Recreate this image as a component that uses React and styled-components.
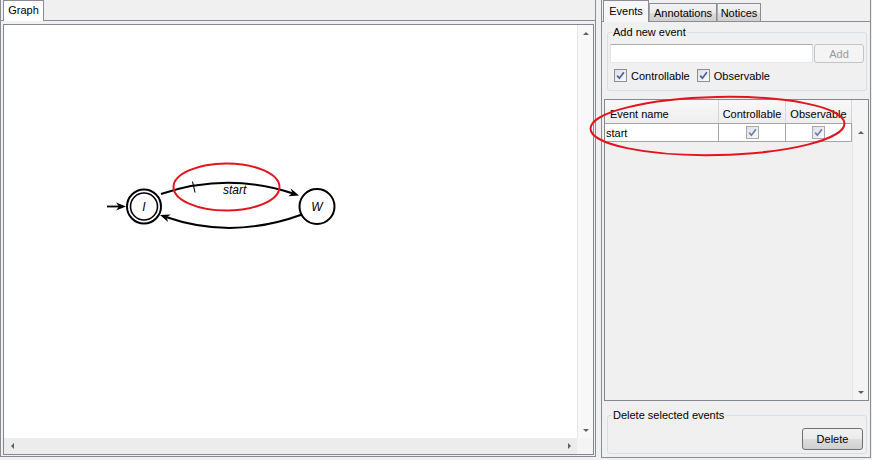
import React from "react";
import styled, { createGlobalStyle } from "styled-components";

const GlobalStyle = createGlobalStyle`
  * { box-sizing: border-box; }
  html, body { margin: 0; padding: 0; background: #f0f0f0; }
  body {
    font-family: "Liberation Sans", Arial, sans-serif;
    font-size: 11px;
    color: #000;
  }
`;

const Page = styled.div`
  position: relative;
  display: flex;
  gap: 5px;
  width: 872px;
  height: 460px;
  overflow: hidden;
  background: #f0f0f0;
`;

const Pane = styled.div`
  display: flex;
  flex-direction: column;
  flex: none;
  width: ${(p) => p.$width}px;
  height: ${(p) => p.$height}px;
  border: 1px solid #898c95;
  border-top: none;
`;

const TabStrip = styled.div`
  display: flex;
  align-items: flex-end;
  flex: none;
  height: ${(p) => p.$height}px;
  padding-left: ${(p) => p.$inset}px;
  border-bottom: 1px solid #898c95;
`;

const Tab = styled.div`
  position: relative;
  z-index: 1;
  display: flex;
  align-items: center;
  justify-content: center;
  width: ${(p) => p.$w}px;
  height: ${(p) => p.$h}px;
  margin-bottom: ${(p) => (p.$active ? -1 : 0)}px;
  padding-bottom: ${(p) => (p.$active ? 2 : 0)}px;
  border: 1px solid #898c95;
  border-bottom: none;
  border-left-color: ${(p) => (p.$active ? "#898c95" : "#a7abb0")};
  background: ${(p) =>
    p.$active ? p.$bg : "linear-gradient(#f3f3f3, #ebebeb 50%, #dddddd 51%, #cfcfcf)"};
  white-space: nowrap;
`;

/* ---------- scroll panes ---------- */

const ScrollPane = styled.div`
  flex: 1;
  min-height: 0;
  display: grid;
  grid-template-columns: 1fr 16px;
  grid-template-rows: 1fr 16px;
  margin: 3px 1px 1px 2px;
  border: 1px solid #828790;
  background: #fff;
`;

const Canvas = styled.div`
  overflow: hidden;
  background: #fff;

  svg {
    display: block;
  }
`;

const Track = styled.div`
  display: flex;
  flex-direction: ${(p) => (p.$vertical ? "column" : "row")};
  justify-content: space-between;
  background: ${(p) => p.$bg};
  ${(p) => (p.$vertical ? "border-left: 1px solid #e6e6e6;" : "")}
`;

const Corner = styled.div`
  background: #f4f4f4;
`;

const ArrowBox = styled.div`
  display: flex;
  align-items: center;
  justify-content: center;
  width: 16px;
  height: 16px;
  flex: none;
`;

const arrowShapes = {
  up: "border-width: 0 3px 3px 3px; border-bottom-color: #606060;",
  down: "border-width: 3px 3px 0 3px; border-top-color: #606060;",
  left: "border-width: 3px 3px 3px 0; border-right-color: #606060;",
  right: "border-width: 3px 0 3px 3px; border-left-color: #606060;",
};

const Arrow = styled.span`
  width: 0;
  height: 0;
  border-style: solid;
  border-color: transparent;
  ${(p) => arrowShapes[p.$dir]}
`;

/* ---------- right panel ---------- */

const GroupBox = styled.fieldset`
  flex: none;
  min-width: 0;
  margin: ${(p) => p.$top}px 3px 0 5px;
  padding: ${(p) => p.$pad};
  border: 1px solid #d5dfe5;
  border-radius: 3px;
`;

const Legend = styled.legend`
  margin-left: 2px;
  padding: 0 1px;
  line-height: 13px;
  font-size: 11px;
`;

const Row = styled.div`
  display: flex;
  align-items: center;
  gap: ${(p) => p.$gap}px;
  height: ${(p) => p.$h}px;
  margin-top: ${(p) => p.$mt || 0}px;
  padding-left: ${(p) => p.$pl || 0}px;
  justify-content: ${(p) => p.$justify || "flex-start"};
`;

const TextField = styled.input`
  flex: 1;
  min-width: 0;
  height: 19px;
  margin: 0;
  padding: 0 3px;
  border: 1px solid;
  border-color: #abadb3 #dbdfe6 #e3e9ef #e2e3ea;
  background: #fff;
  font: inherit;
  outline: none;
`;

const Button = styled.button`
  flex: none;
  width: ${(p) => p.$w}px;
  height: ${(p) => p.$h}px;
  margin: 0;
  padding: 0;
  border: 1px solid ${(p) => (p.disabled ? "#c2c5c8" : "#707070")};
  border-radius: 3px;
  background: ${(p) =>
    p.disabled ? "#f4f4f4" : "linear-gradient(#f2f2f2, #ebebeb 48%, #dddddd 52%, #cfcfcf)"};
  color: ${(p) => (p.disabled ? "#9a9a9a" : "#000")};
  font-family: inherit;
  font-size: 11px;
`;

const CheckLabel = styled.label`
  display: flex;
  align-items: center;
  gap: 4px;
`;

const Box = styled.span`
  display: inline-flex;
  align-items: center;
  justify-content: center;
  width: 13px;
  height: 13px;
  flex: none;
  border: 1px solid ${(p) => (p.$dim ? "#a9a9a9" : "#8e8f8f")};
  background: linear-gradient(135deg, #dcdfe4, #fbfbfb);
`;

const CheckBox = ({ dim }) => (
  <Box $dim={dim}>
    <svg width="11" height="11" viewBox="0 0 11 11">
      <path
        d="M2.2 5.6 L4.4 8.2 L8.9 2.2"
        fill="none"
        stroke={dim ? "#6d7fae" : "#4a5f97"}
        strokeWidth="1.7"
      />
    </svg>
  </Box>
);

const TableBox = styled.div`
  flex: none;
  height: 302px;
  margin: 8px 1px 0 2px;
  display: grid;
  grid-template-columns: 1fr 16px;
  grid-template-rows: 24px 1fr;
  border: 1px solid #828790;
  background: #f0f0f0;
`;

const HeaderRow = styled.div`
  display: flex;
  border-bottom: 1px solid #a5a5a5;
`;

const HeaderCell = styled.div`
  display: flex;
  align-items: center;
  justify-content: ${(p) => (p.$center ? "center" : "flex-start")};
  width: ${(p) => p.$w}px;
  padding-top: 4px;
  padding-left: ${(p) => (p.$center ? 0 : 5)}px;
  border-right: 1px solid #d5d5d5;
  background: linear-gradient(#f8f8f8, #eeeeee);
`;

const TableBody = styled.div`
  background: #f0f0f0;
`;

const DataRow = styled.div`
  display: flex;
  height: 18px;
  background: #fff;
  border-bottom: 1px solid #a5a5a5;
`;

const DataCell = styled.div`
  display: flex;
  align-items: center;
  justify-content: ${(p) => (p.$center ? "center" : "flex-start")};
  width: ${(p) => p.$w}px;
  padding-left: ${(p) => (p.$center ? 0 : 1)}px;
  border-right: 1px solid #a5a5a5;
`;

const Overlay = styled.svg`
  position: absolute;
  left: 0;
  top: 0;
  pointer-events: none;
`;

const columns = [
  { name: "Event name", w: 114 },
  { name: "Controllable", w: 67, center: true },
  { name: "Observable", w: 66, center: true },
];

const arrowHead = (tx, ty, dx, dy) => {
  const nx = -dy;
  const ny = dx;
  const p = (a, b) => `${(tx + a * dx + b * nx).toFixed(1)},${(ty + a * dy + b * ny).toFixed(1)}`;
  return [p(0, 0), p(-10, 4), p(-7, 0), p(-10, -4)].join(" ");
};

const Graph = () => (
  <svg width="573" height="413">
    <g transform="translate(-4,-25)" stroke="#000" fill="none">
      {/* initial arrow */}
      <line x1="107" y1="206.5" x2="120" y2="206.5" strokeWidth="1.8" />
      <polygon points={arrowHead(126, 206.5, 1, 0)} fill="#000" stroke="none" />

      {/* state I */}
      <circle cx="144" cy="206.5" r="17" strokeWidth="2" />
      <circle cx="144" cy="206.5" r="13.5" strokeWidth="1.6" />
      {/* state W */}
      <circle cx="317" cy="206.5" r="17.5" strokeWidth="2" />

      {/* I -> W */}
      <path d="M161 194 Q228 172 293 193.5" strokeWidth="2" />
      <polygon points={arrowHead(299, 195.5, 0.949, 0.314)} fill="#000" stroke="none" />
      <line x1="192.5" y1="181.5" x2="195" y2="192.5" strokeWidth="1.1" />

      {/* W -> I */}
      <path d="M302 214.5 Q232 240 166 217" strokeWidth="2" />
      <polygon points={arrowHead(160, 215, -0.945, -0.328)} fill="#000" stroke="none" />
    </g>
    <g
      transform="translate(-4,-25)"
      fontFamily="Liberation Sans, Arial, sans-serif"
      fontStyle="italic"
      fontSize="12"
      fill="#000"
    >
      <text x="144" y="210.5" textAnchor="middle">I</text>
      <text x="317" y="210.5" textAnchor="middle">W</text>
      <text x="223" y="194">start</text>
    </g>
  </svg>
);

const App = () => {
  return (
    <Page>
      <GlobalStyle />

      <Pane $width={596} $height={457}>
        <TabStrip $height={21} $inset={2}>
          <Tab $active $w={41} $h={21} $bg="#ffffff">
            Graph
          </Tab>
        </TabStrip>
        <ScrollPane>
          <Canvas>
            <Graph />
          </Canvas>
          <Track $vertical $bg="#f8f8f8">
            <ArrowBox>
              <Arrow $dir="up" />
            </ArrowBox>
            <ArrowBox>
              <Arrow $dir="down" />
            </ArrowBox>
          </Track>
          <Track $bg="#ececec">
            <ArrowBox>
              <Arrow $dir="left" />
            </ArrowBox>
            <ArrowBox>
              <Arrow $dir="right" />
            </ArrowBox>
          </Track>
          <Corner />
        </ScrollPane>
      </Pane>

      <Pane $width={270} $height={458}>
        <TabStrip $height={22} $inset={1}>
          <Tab $active $w={46} $h={22} $bg="#f7f7f7">
            Events
          </Tab>
          <Tab $w={68} $h={18}>
            Annotations
          </Tab>
          <Tab $w={44} $h={18}>
            Notices
          </Tab>
        </TabStrip>

        <GroupBox $top={4} $pad="5px 2px 7px 2px">
          <Legend>Add new event</Legend>
          <Row $gap={1} $h={19}>
            <TextField />
            <Button disabled $w={50} $h={19}>
              Add
            </Button>
          </Row>
          <Row $gap={7} $h={15} $mt={5} $pl={4}>
            <CheckLabel>
              <CheckBox />
              Controllable
            </CheckLabel>
            <CheckLabel>
              <CheckBox />
              Observable
            </CheckLabel>
          </Row>
        </GroupBox>

        <TableBox>
          <HeaderRow>
            {columns.map((c) => (
              <HeaderCell key={c.name} $w={c.w} $center={c.center}>
                {c.name}
              </HeaderCell>
            ))}
          </HeaderRow>
          <Corner />
          <TableBody>
            <DataRow>
              <DataCell $w={columns[0].w}>start</DataCell>
              <DataCell $w={columns[1].w} $center>
                <CheckBox dim />
              </DataCell>
              <DataCell $w={columns[2].w} $center>
                <CheckBox dim />
              </DataCell>
            </DataRow>
          </TableBody>
          <Track $vertical $bg="#f4f4f4">
            <ArrowBox>
              <Arrow $dir="up" />
            </ArrowBox>
            <ArrowBox>
              <Arrow $dir="down" />
            </ArrowBox>
          </Track>
        </TableBox>

        <GroupBox $top={8} $pad="6px 3px 3px 2px">
          <Legend>Delete selected events</Legend>
          <Row $gap={0} $h={22} $justify="flex-end">
            <Button $w={61} $h={22}>
              Delete
            </Button>
          </Row>
        </GroupBox>
      </Pane>

      <Overlay width="872" height="460">
        <ellipse cx="226.5" cy="187" rx="53" ry="23.5" fill="none" stroke="#e3141d" strokeWidth="2" />
        <ellipse
          cx="717.5"
          cy="126"
          rx="127"
          ry="29"
          fill="none"
          stroke="#e3141d"
          strokeWidth="2"
          transform="rotate(-1.2 717.5 126)"
        />
      </Overlay>
    </Page>
  );
};

export default App;
